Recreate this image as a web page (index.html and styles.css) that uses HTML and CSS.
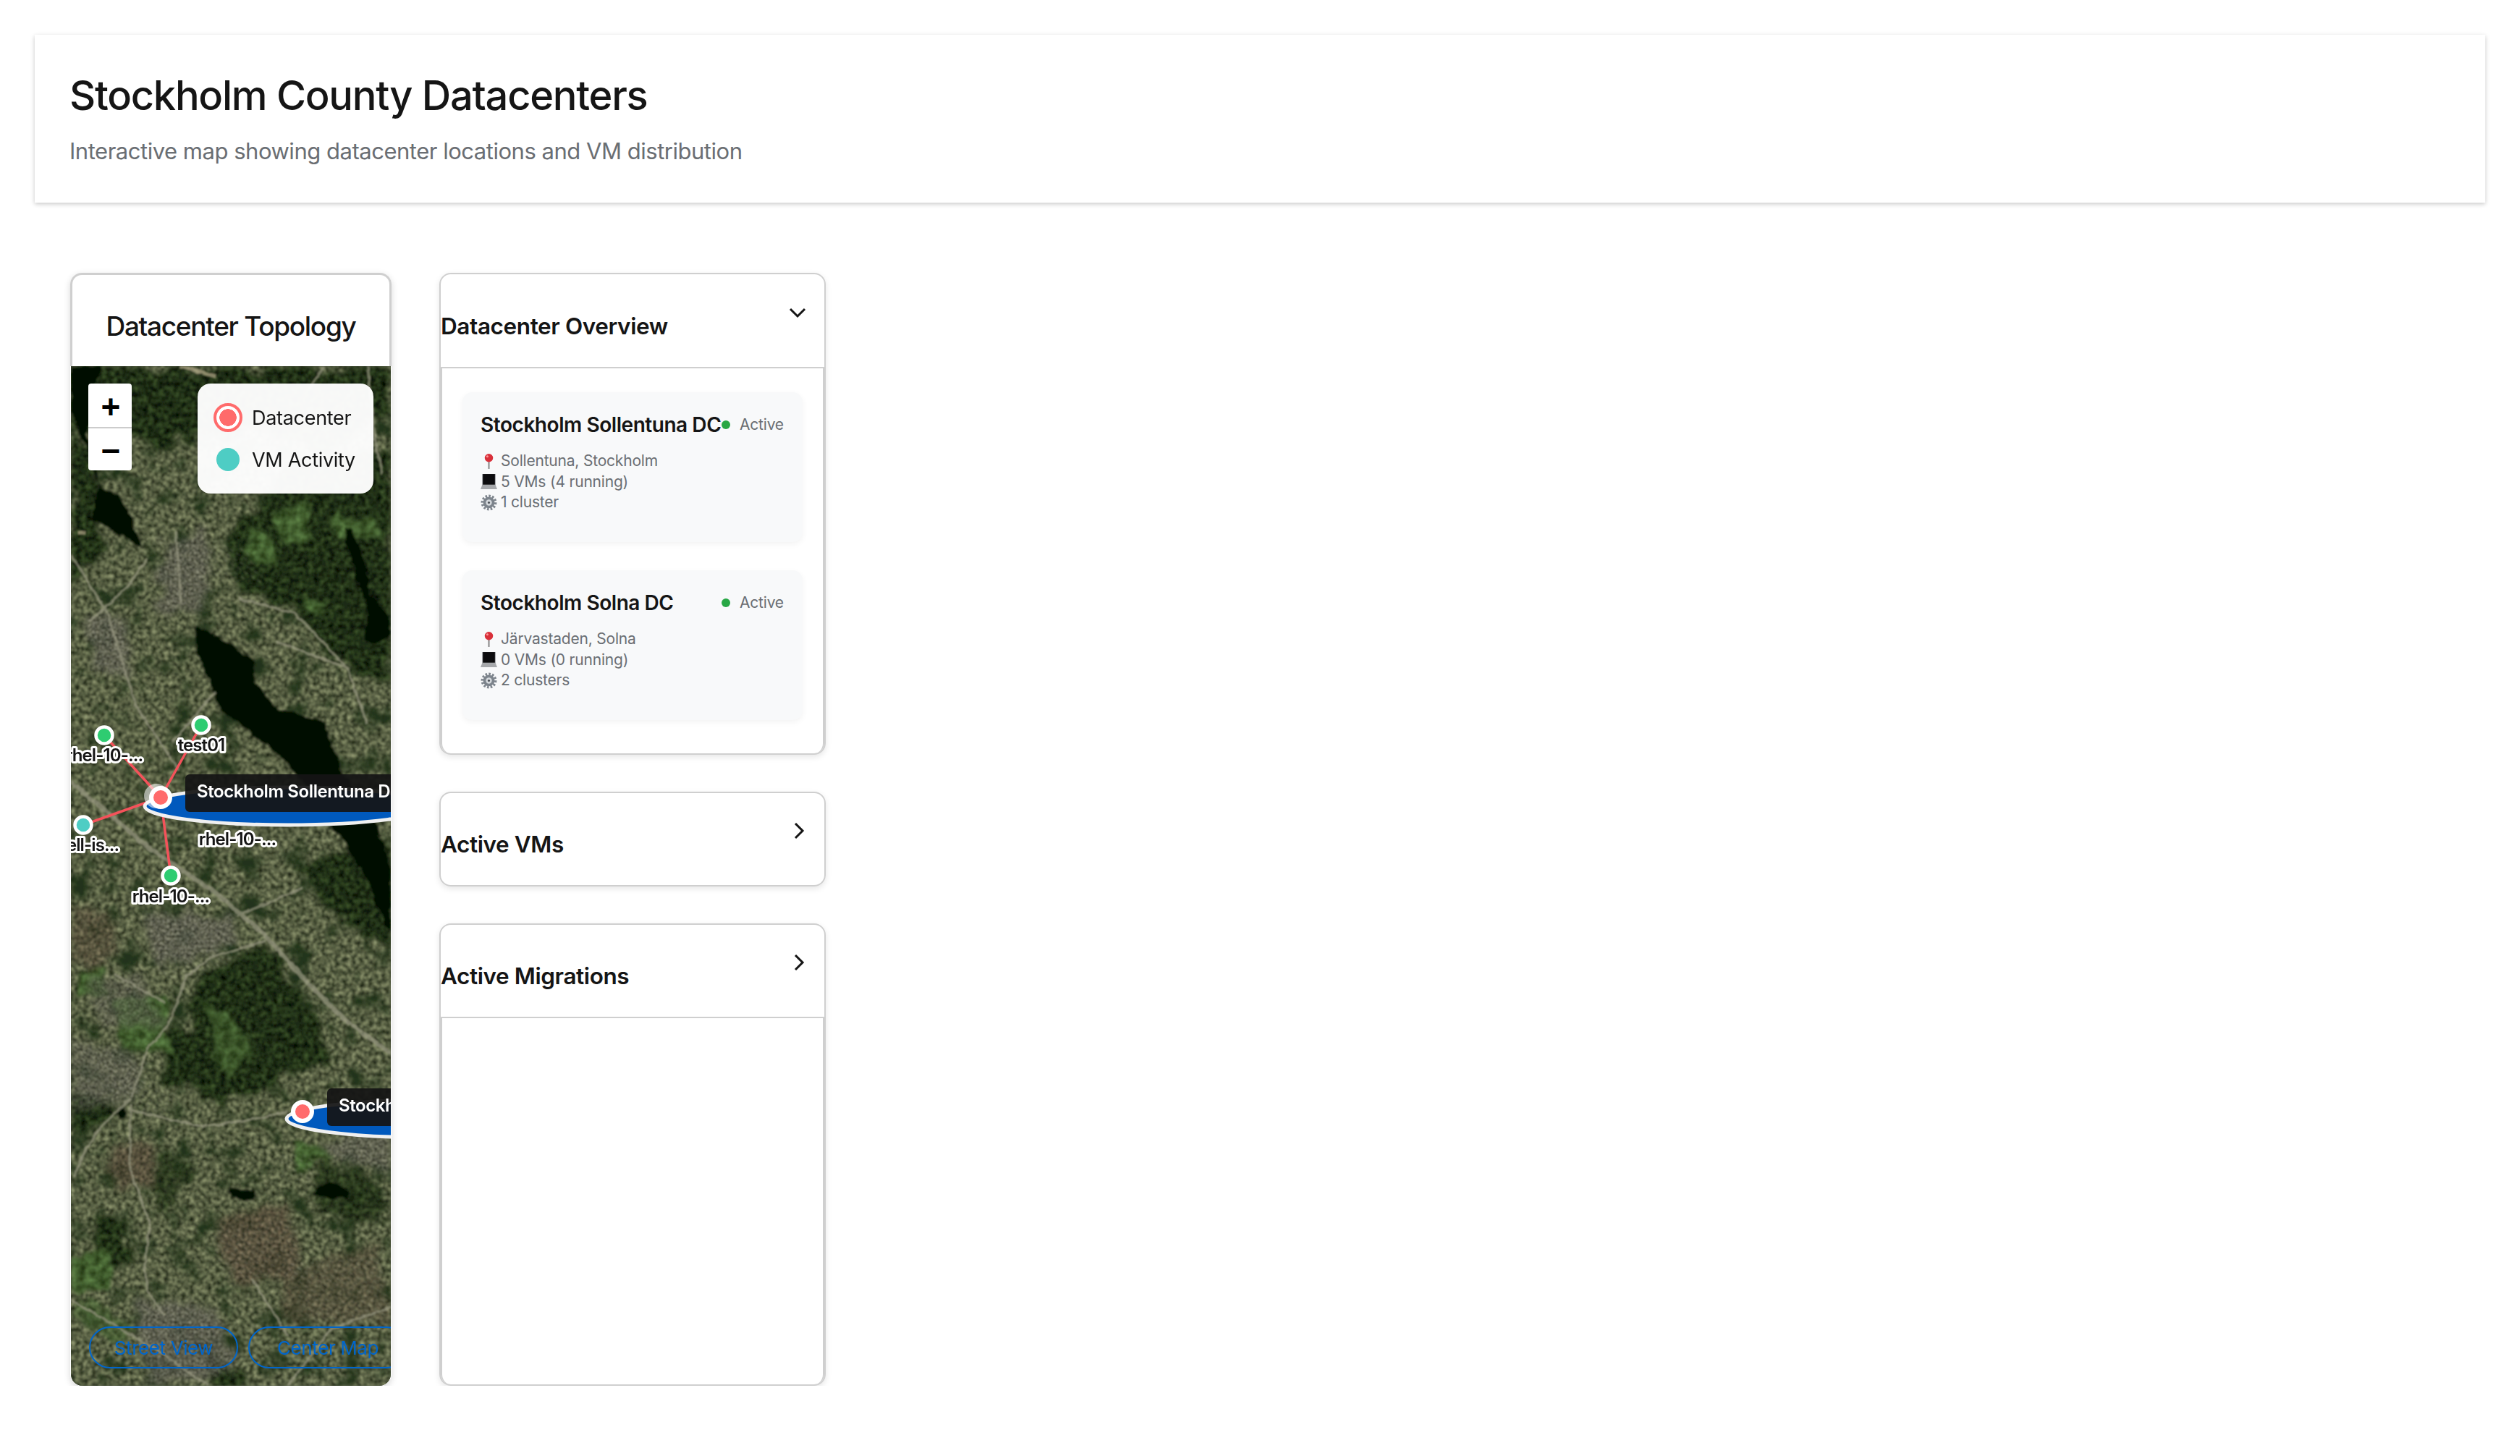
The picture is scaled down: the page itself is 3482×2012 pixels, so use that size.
FILE: index.html
```html
<!DOCTYPE html>
<html>
<head>
  <meta charset="UTF-8">
  <title>Stockholm County Datacenters</title>
  <link rel="stylesheet" href="styles.css">
</head>
<body>

  <header class="page-header">
    <h1>Stockholm County Datacenters</h1>
    <p>Interactive map showing datacenter locations and VM distribution</p>
  </header>

  <main class="layout">

    <!-- Map card -->
    <section class="topology">
      <h2 class="topology-title">Datacenter Topology</h2>
      <div class="map">
        <svg class="map-art" viewBox="0 0 442 1409" width="442" height="1409">
          <defs>
            <filter id="suburb" filterUnits="userSpaceOnUse" x="0" y="0" width="442" height="1409" color-interpolation-filters="sRGB">
              <feTurbulence type="fractalNoise" baseFrequency="0.17" numOctaves="4" seed="3"/>
              <feColorMatrix values="0 0 0 .72 -.02  0 0 0 .72 .01  0 0 0 .58 -.03  0 0 0 0 1"/>
              <feComposite in2="SourceAlpha" operator="in"/>
            </filter>
            <filter id="mottle" filterUnits="userSpaceOnUse" x="0" y="0" width="442" height="1409" color-interpolation-filters="sRGB">
              <feTurbulence type="fractalNoise" baseFrequency="0.03" numOctaves="4" seed="23"/>
              <feColorMatrix values="0 0 0 0 .13  0 0 0 0 .2  0 0 0 0 .1  0 0 0 3.5 -1.85"/>
              <feGaussianBlur stdDeviation="1"/>
            </filter>
            <filter id="forest" filterUnits="userSpaceOnUse" x="0" y="0" width="442" height="1409" color-interpolation-filters="sRGB">
              <feTurbulence type="fractalNoise" baseFrequency="0.03" numOctaves="3" seed="8" result="warp"/>
              <feDisplacementMap in="SourceAlpha" in2="warp" scale="44" xChannelSelector="R" yChannelSelector="G" result="shape"/>
              <feGaussianBlur in="shape" stdDeviation="3" result="soft"/>
              <feTurbulence type="fractalNoise" baseFrequency="0.14" numOctaves="4" seed="11"/>
              <feColorMatrix values="0 0 0 .35 -.05  0 0 0 .45 -.04  0 0 0 .25 -.04  0 0 0 0 1"/>
              <feComposite in2="soft" operator="in"/>
            </filter>
            <filter id="field" filterUnits="userSpaceOnUse" x="0" y="0" width="442" height="1409" color-interpolation-filters="sRGB">
              <feTurbulence type="fractalNoise" baseFrequency="0.03" numOctaves="3" seed="5" result="warp"/>
              <feDisplacementMap in="SourceAlpha" in2="warp" scale="30" xChannelSelector="R" yChannelSelector="G" result="shape"/>
              <feGaussianBlur in="shape" stdDeviation="2" result="soft"/>
              <feTurbulence type="fractalNoise" baseFrequency="0.1" numOctaves="3" seed="21"/>
              <feColorMatrix values="0 0 0 .35 .08  0 0 0 .45 .14  0 0 0 .3 .03  0 0 0 0 1"/>
              <feComposite in2="soft" operator="in"/>
            </filter>
            <filter id="urban" filterUnits="userSpaceOnUse" x="0" y="0" width="442" height="1409" color-interpolation-filters="sRGB">
              <feTurbulence type="fractalNoise" baseFrequency="0.04" numOctaves="3" seed="14" result="warp"/>
              <feDisplacementMap in="SourceAlpha" in2="warp" scale="36" xChannelSelector="R" yChannelSelector="G" result="shape"/>
              <feGaussianBlur in="shape" stdDeviation="5" result="soft"/>
              <feTurbulence type="fractalNoise" baseFrequency="0.3" numOctaves="3" seed="31"/>
              <feColorMatrix values="0 0 0 .9 -.06  0 0 0 .88 -.06  0 0 0 .85 -.08  0 0 0 0 1"/>
              <feComposite in2="soft" operator="in"/>
            </filter>
            <filter id="homes" filterUnits="userSpaceOnUse" x="0" y="0" width="442" height="1409" color-interpolation-filters="sRGB">
              <feTurbulence type="fractalNoise" baseFrequency="0.04" numOctaves="3" seed="17" result="warp"/>
              <feDisplacementMap in="SourceAlpha" in2="warp" scale="30" xChannelSelector="R" yChannelSelector="G" result="shape"/>
              <feGaussianBlur in="shape" stdDeviation="5" result="soft"/>
              <feTurbulence type="fractalNoise" baseFrequency="0.22" numOctaves="3" seed="41"/>
              <feColorMatrix values="0 0 0 .8 -.06  0 0 0 .65 -.04  0 0 0 .55 -.05  0 0 0 0 1"/>
              <feComposite in2="soft" operator="in"/>
            </filter>
            <filter id="shore" filterUnits="userSpaceOnUse" x="0" y="0" width="442" height="1409">
              <feTurbulence type="fractalNoise" baseFrequency="0.06" numOctaves="2" seed="2" result="warp"/>
              <feDisplacementMap in="SourceGraphic" in2="warp" scale="10" xChannelSelector="R" yChannelSelector="G"/>
              <feGaussianBlur stdDeviation=".8"/>
            </filter>
            <filter id="track" filterUnits="userSpaceOnUse" x="0" y="0" width="442" height="1409">
              <feTurbulence type="fractalNoise" baseFrequency="0.09" numOctaves="2" seed="9" result="warp"/>
              <feDisplacementMap in="SourceGraphic" in2="warp" scale="5" xChannelSelector="R" yChannelSelector="G"/>
              <feGaussianBlur stdDeviation=".6"/>
            </filter>
            <filter id="soft" filterUnits="userSpaceOnUse" x="0" y="0" width="442" height="1409">
              <feGaussianBlur stdDeviation=".8"/>
            </filter>
            <pattern id="blocks" width="11" height="8" patternUnits="userSpaceOnUse" patternTransform="rotate(32)">
              <rect x="1" y="1" width="6" height="2" fill="#c9c6b8"/>
              <rect x="1" y="4" width="7" height="2" fill="#23261f"/>
            </pattern>
          </defs>

          <g filter="url(#soft)">
            <!-- ground -->
            <rect class="ground" width="442" height="1409" filter="url(#suburb)"/>
            <rect class="ground" width="442" height="1409" filter="url(#mottle)"/>

            <!-- forest -->
            <g filter="url(#forest)">
              <path d="M0 0H442V64L360 120 250 90 120 110 60 84 0 90Z"/>
              <path d="M0 90L36 120 44 260 0 300Z"/>
              <path d="M300 140L442 110V440L360 400 300 330 226 300 210 240Z"/>
              <path d="M310 690L442 660V800L390 790Z"/>
              <path d="M170 840L270 800 340 900 350 960 260 1000 170 980Z"/>
              <path d="M130 920L230 930 240 990 130 990Z"/>
              <path d="M170 970L250 960 260 1010 180 1014Z"/>
              <path d="M26 1184L70 1180 92 1250 60 1254Z"/>
              <path d="M0 1010L50 1010 60 1040 0 1050Z"/>
              <path d="M110 1090L170 1100 150 1170 110 1160Z" opacity=".7"/>
              <path d="M340 1108L400 1100 440 1180 340 1170Z" opacity=".8"/>
              <path d="M170 1330L250 1409H190Z"/>
            </g>

            <!-- fields and lawns -->
            <g filter="url(#field)">
              <path d="M240 230L270 230 290 280 250 270Z"/>
              <path d="M280 200L330 190 330 240 290 240Z"/>
              <path d="M360 200L420 210 430 240 370 240Z"/>
              <path d="M320 320L350 320 350 340 325 340Z"/>
              <path d="M10 830L50 830 50 870 10 870Z"/>
              <path d="M60 880L130 870 140 950 70 940Z"/>
              <path d="M180 870L220 900 260 950 210 980Z" opacity=".8"/>
              <path d="M0 1230L60 1220 50 1276 0 1276Z"/>
              <path d="M20 1280L90 1330 60 1350 0 1310Z" opacity=".6"/>
              <path d="M310 1070L360 1090 320 1110Z"/>
            </g>

            <!-- built up areas -->
            <g class="built" filter="url(#urban)">
              <path d="M130 240L190 220 190 340 120 340Z"/>
              <path d="M10 350L70 340 90 430 40 420Z"/>
              <path d="M100 750L220 760 230 800 120 830Z"/>
              <path d="M20 850L100 840 130 910 40 920Z" opacity=".7"/>
              <path d="M0 930L90 950 100 1000 0 1010Z" opacity=".8"/>
              <path d="M80 1290L200 1300 230 1390 110 1409Z"/>
              <path d="M340 1080L442 1040V1120L400 1110Z" opacity=".9"/>
              <path d="M0 1000L90 980 90 1020 0 1030Z" opacity=".7"/>
            </g>
            <g class="built" filter="url(#homes)">
              <path d="M200 1180L300 1160 320 1260 220 1270Z"/>
              <path d="M50 1080L110 1070 120 1130 60 1140Z"/>
              <path d="M290 1260L420 1210 442 1320 300 1320Z" opacity=".7"/>
              <path d="M0 740L60 760 60 820 0 830Z" opacity=".8"/>
            </g>
            <path class="blocks" d="M110 750L230 770 220 830 130 850Z"/>
            <path class="blocks" d="M20 930L110 960 100 1010 10 1000Z"/>
            <path class="blocks" d="M100 980L150 1010 130 1040 90 1030Z"/>
            <path class="blocks" d="M190 1190L310 1180 320 1260 210 1260Z"/>
            <path class="blocks" d="M290 1090L340 1090 330 1130 290 1120Z"/>
            <path class="blocks" d="M300 1240L430 1230 442 1320 320 1320Z"/>
            <path class="blocks" d="M180 240L240 250 270 300 190 290Z"/>
            <path class="blocks" d="M130 1290L210 1320 190 1380 110 1370Z"/>

            <!-- water -->
            <g class="water" filter="url(#shore)">
              <path d="M0 0H44L30 40 22 90 30 144 42 170 72 184 98 252 72 236 30 212 38 150 14 100 0 60Z"/>
              <path d="M169 357L199 371 249 404 255 437 282 471 349 491 372 554 422 634 442 694V787L422 741 402 694 362 637 302 551 259 514 232 494 209 477 189 431 175 394Z"/>
              <path d="M379 227L389 227 409 277 412 314 439 347 439 371 422 384 405 381 412 344 399 301 382 251Z"/>
              <path d="M335 1144L359 1124 385 1141 382 1152 349 1147Z"/>
              <path d="M218 1140L254 1138 250 1152 222 1150Z"/>
              <path d="M64 1030L74 1024 78 1034 66 1042Z"/>
            </g>

            <!-- roads -->
            <g class="roads" filter="url(#track)">
              <path class="road-wide" d="M0 574L109 667 199 727 269 787 325 850 375 900 442 950"/>
              <path d="M269 794L192 817 159 844 135 910 105 944 84 1010"/>
              <path d="M79 1027L182 1051 249 1041 299 1031"/>
              <path d="M82 1020L82 1111 109 1184 102 1244 105 1277 129 1311"/>
              <path d="M84 1012C50 1040 20 1070 5 1120"/>
              <path d="M105 267L79 304 25 354"/>
              <path d="M145 227L152 327"/>
              <path d="M232 321L309 341 382 417 409 494"/>
              <path d="M285 381L382 417"/>
              <path d="M0 260L50 340 90 470 150 560"/>
              <path d="M140 520L200 450"/>
              <path d="M350 0L330 30"/>
              <path d="M410 0L420 100 430 150"/>
              <path d="M0 1290L120 1360 190 1409"/>
              <path d="M442 1300L360 1330 300 1409"/>
              <path d="M250 1260L300 1340"/>
              <path d="M230 760L320 720"/>
              <path d="M60 840L130 880"/>
              <path class="road-sand" d="M150 0L200 14"/>
              <path class="road-sand" d="M20 230H10"/>
            </g>
          </g>

          <!-- links -->
          <g class="links">
            <line x1="124" y1="596" x2="46" y2="510"/>
            <line x1="124" y1="596" x2="180" y2="496"/>
            <line x1="124" y1="596" x2="17" y2="634"/>
            <line x1="124" y1="596" x2="138" y2="704"/>
          </g>

          <!-- vm nodes -->
          <circle class="vm-node" cx="230" cy="621" r="11.5"/>
          <circle class="vm-node" cx="46" cy="510" r="11.5"/>
          <circle class="vm-node" cx="180" cy="496" r="11.5"/>
          <circle class="vm-node vm-teal" cx="17" cy="634" r="11.5"/>
          <circle class="vm-node" cx="138" cy="704" r="11.5"/>

          <text class="vm-label" x="46" y="546">rhel-10-...</text>
          <text class="vm-label" x="180" y="532">test01</text>
          <text class="vm-label" x="17" y="670">shell-is...</text>
          <text class="vm-label" x="138" y="741">rhel-10-...</text>
          <text class="vm-label" x="230" y="662">rhel-10-...</text>

          <!-- coverage ellipses and datacenters -->
          <ellipse class="coverage" cx="299" cy="608" rx="197" ry="26"/>
          <ellipse class="coverage" cx="495" cy="1040" rx="197" ry="26"/>
          <circle class="dc-halo" cx="118" cy="594" r="17"/>
          <circle class="dc-node" cx="124" cy="596" r="13"/>
          <circle class="dc-node" cx="320" cy="1030" r="13"/>
        </svg>

        <div class="zoom-control">
          <button>+</button>
          <button>&minus;</button>
        </div>

        <div class="legend">
          <div class="legend-item"><span class="swatch-dc"></span>Datacenter</div>
          <div class="legend-item"><span class="swatch-vm"></span>VM Activity</div>
        </div>

        <div class="dc-tip tip-sollentuna">Stockholm Sollentuna DC</div>
        <div class="dc-tip tip-solna">Stockholm Solna DC</div>

        <div class="map-actions">
          <button>Street View</button>
          <button>Center Map</button>
        </div>
      </div>
    </section>

    <!-- Side panels -->
    <div class="side">

      <section class="panel">
        <div class="panel-head">
          <h3>Datacenter Overview</h3>
          <svg class="chevron chevron-down" width="24" height="16" viewBox="0 0 24 16"><path d="M2 3l10 10L22 3"/></svg>
        </div>
        <div class="panel-body">

          <article class="dc-card">
            <div class="dc-card-top">
              <span class="dc-name">Stockholm Sollentuna DC</span>
              <span class="dc-status"><i></i>Active</span>
            </div>
            <ul class="dc-facts">
              <li>
                <svg class="fact-icon" viewBox="0 0 22 22"><path class="pin-needle" d="M11 10v11"/><circle class="pin-ball" cx="11" cy="6.500" r="5.500"/><circle class="pin-shine" cx="9" cy="4.500" r="1.500"/></svg>
                Sollentuna, Stockholm
              </li>
              <li>
                <svg class="fact-icon" viewBox="0 0 22 22"><path class="lap-base" d="M2 1h18v15l2 5H0l2-5z"/><path class="lap-screen" d="M3 1h16v14H3z"/></svg>
                5 VMs (4 running)
              </li>
              <li>
                <svg class="fact-icon" viewBox="0 0 22 22"><circle class="gear-teeth" cx="11" cy="11" r="8.500"/><circle class="gear-body" cx="11" cy="11" r="7.500"/><circle class="gear-eye" cx="11" cy="11" r="4"/><circle class="gear-hole" cx="11" cy="11" r="1.500"/></svg>
                1 cluster
              </li>
            </ul>
          </article>

          <article class="dc-card">
            <div class="dc-card-top">
              <span class="dc-name">Stockholm Solna DC</span>
              <span class="dc-status"><i></i>Active</span>
            </div>
            <ul class="dc-facts">
              <li>
                <svg class="fact-icon" viewBox="0 0 22 22"><path class="pin-needle" d="M11 10v11"/><circle class="pin-ball" cx="11" cy="6.500" r="5.500"/><circle class="pin-shine" cx="9" cy="4.500" r="1.500"/></svg>
                Järvastaden, Solna
              </li>
              <li>
                <svg class="fact-icon" viewBox="0 0 22 22"><path class="lap-base" d="M2 1h18v15l2 5H0l2-5z"/><path class="lap-screen" d="M3 1h16v14H3z"/></svg>
                0 VMs (0 running)
              </li>
              <li>
                <svg class="fact-icon" viewBox="0 0 22 22"><circle class="gear-teeth" cx="11" cy="11" r="8.500"/><circle class="gear-body" cx="11" cy="11" r="7.500"/><circle class="gear-eye" cx="11" cy="11" r="4"/><circle class="gear-hole" cx="11" cy="11" r="1.500"/></svg>
                2 clusters
              </li>
            </ul>
          </article>

        </div>
      </section>

      <section class="panel panel-closed">
        <div class="panel-head">
          <h3>Active VMs</h3>
          <svg class="chevron" width="16" height="24" viewBox="0 0 16 24"><path d="M3 2l10 10L3 22"/></svg>
        </div>
      </section>

      <section class="panel panel-fill">
        <div class="panel-head">
          <h3>Active Migrations</h3>
          <svg class="chevron" width="16" height="24" viewBox="0 0 16 24"><path d="M3 2l10 10L3 22"/></svg>
        </div>
        <div class="panel-body"></div>
      </section>

    </div>
  </main>

</body>
</html>
```

FILE: styles.css
```css
body {
  margin: 0;
  background-color: #fff;
  font-family: Inter, "Noto Sans", sans-serif;
  color: #151515;
}

.page-header {
  margin: 48px 48px 0;
  padding: 48px 48px 47px;
  background-color: #fff;
  box-shadow: 0 2px 6px rgba(0, 0, 0, 0.22);
}

.page-header h1 {
  margin: 0;
  font-size: 56px;
  font-weight: 500;
  line-height: 72px;
  letter-spacing: -1.25px;
}

.page-header p {
  margin: 17px 0 0;
  font-size: 31px;
  line-height: 48px;
  letter-spacing: -0.48px;
  color: #6a6e73;
}

.layout {
  display: flex;
  gap: 66px;
  padding: 97px 48px 0 97px;
}

/* map card */
.topology {
  width: 444px;
  border-radius: 16px;
  box-shadow: 0 3px 10px rgba(0, 0, 0, 0.16);
}

.topology-title {
  margin: 0;
  height: 126px;
  border: 3px solid #cfcfcf;
  border-bottom: none;
  border-radius: 16px 16px 0 0;
  font-size: 37px;
  font-weight: 500;
  line-height: 142px;
  letter-spacing: -1.3px;
  text-align: center;
}

.map {
  position: relative;
  width: 442px;
  height: 1409px;
  margin: 0 1px;
  overflow: hidden;
  border-radius: 0 0 16px 16px;
  background-color: #3c4732;
}

.map-art {
  position: absolute;
  top: 0;
  left: 0;
}

.ground { fill: #000; }
.built { opacity: 0.62; }
.blocks { fill: url(#blocks); opacity: 0.16; }
.water path { fill: #040805; }

.roads {
  fill: none;
  stroke: #9b9a83;
  stroke-width: 3;
  opacity: 0.7;
}

.road-wide { stroke-width: 6; }
.road-sand { stroke: #b9ae8e; stroke-width: 5; }

.links line {
  stroke: #f4525a;
  stroke-width: 3.500;
}

.vm-node {
  fill: #2ecc71;
  stroke: #fff;
  stroke-width: 4.500;
}

.vm-teal { fill: #4ecdc4; }

.vm-label {
  fill: #151515;
  stroke: #fff;
  stroke-width: 6px;
  stroke-linejoin: round;
  paint-order: stroke;
  font-size: 24px;
  font-weight: 600;
  letter-spacing: -0.9px;
  text-anchor: middle;
}

.coverage {
  fill: #0059bd;
  stroke: #f0f0f0;
  stroke-width: 5;
}

.dc-halo { fill: #fff; opacity: 0.55; }

.dc-node {
  fill: #ff6b6b;
  stroke: #fff;
  stroke-width: 6;
}

.zoom-control {
  position: absolute;
  top: 24px;
  left: 24px;
  width: 60px;
  overflow: hidden;
  border-radius: 4px;
}

.zoom-control button {
  display: block;
  width: 60px;
  height: 60px;
  padding: 3px 0 0 2px;
  border: none;
  background-color: #fff;
  font-family: "Liberation Sans", sans-serif;
  font-size: 46px;
  font-weight: 700;
  line-height: 54px;
  color: #000;
}

.zoom-control button + button {
  border-top: 2px solid #ccc;
}

.legend {
  position: absolute;
  top: 24px;
  left: 175px;
  box-sizing: border-box;
  width: 243px;
  height: 152px;
  padding: 18px 0 0 22px;
  border-radius: 18px;
  background-color: rgba(255, 255, 255, 0.97);
  box-shadow: 0 0 2px 1px rgba(0, 0, 0, 0.18);
}

.legend-item {
  display: flex;
  align-items: center;
  height: 58px;
  font-size: 27px;
  letter-spacing: -0.3px;
}

.swatch-dc,
.swatch-vm {
  box-sizing: border-box;
  flex: none;
  border-radius: 50%;
}

.swatch-dc {
  width: 40px;
  height: 40px;
  margin-right: 13px;
  border: 4px solid #ff6b6b;
  background: radial-gradient(circle, #ff6b6b 0, #ff6b6b 11.500px, #fff 12px);
}

.swatch-vm {
  width: 32px;
  height: 32px;
  margin: 0 17px 0 4px;
  background-color: #4ecdc4;
}

.dc-tip {
  position: absolute;
  box-sizing: border-box;
  height: 52px;
  padding: 0 16px;
  border-radius: 6px;
  background-color: rgba(20, 20, 20, 0.93);
  font-size: 24px;
  font-weight: 600;
  line-height: 48px;
  letter-spacing: -0.4px;
  white-space: nowrap;
  color: #fff;
}

.tip-sollentuna { top: 564px; left: 158px; }
.tip-solna { top: 998px; left: 354px; }

.map-actions {
  position: absolute;
  top: 1327px;
  left: 25px;
  display: flex;
  gap: 14px;
}

.map-actions button {
  flex: none;
  width: 206px;
  height: 58px;
  padding: 0;
  border: 2px solid #06c;
  border-radius: 29px;
  background: none;
  font-family: inherit;
  font-size: 26px;
  letter-spacing: -0.4px;
  color: #06c;
}

.map-actions button + button { width: 220px; }

/* side panels */
.side {
  display: flex;
  flex-direction: column;
  gap: 51px;
  width: 534px;
}

.panel {
  display: flex;
  flex-direction: column;
  border: 2px solid #cfcfcf;
  border-radius: 16px;
  box-shadow: 0 3px 8px rgba(0, 0, 0, 0.1);
}

.panel-fill { flex: 1; }

.panel-head {
  display: flex;
  justify-content: space-between;
  align-items: flex-start;
  height: 128px;
  padding-right: 27px;
}

.panel-closed .panel-head,
.panel-fill .panel-head { height: 127px; }

.panel-closed h3,
.panel-fill h3 { position: relative; top: -1px; }

.panel-head h3 {
  margin: 0;
  padding-top: 52px;
  font-size: 31.500px;
  font-weight: 600;
  line-height: 40px;
  letter-spacing: -0.4px;
}

.chevron {
  margin-top: 40px;
  fill: none;
  stroke: #151515;
  stroke-width: 3;
}

.chevron-down {
  margin-top: 45px;
  margin-right: -2px;
}

.panel-body {
  flex: 1;
  display: flex;
  flex-direction: column;
  gap: 39px;
  padding: 33px 28px 46px;
  border: solid #cfcfcf;
  border-width: 2px 2px 0;
  border-radius: 0 0 14px 14px;
}

.dc-card {
  box-sizing: border-box;
  height: 207px;
  padding: 26px 25px 0;
  border-radius: 14px;
  background-color: #f8f9fa;
  box-shadow: 0 3px 8px rgba(0, 0, 0, 0.05);
}

.dc-card-top {
  display: flex;
  justify-content: space-between;
  height: 38px;
  line-height: 38px;
}

.dc-name {
  font-size: 28px;
  font-weight: 600;
  letter-spacing: -0.45px;
  white-space: nowrap;
}

.dc-status {
  display: flex;
  align-items: center;
  width: 87px;
  flex: none;
  font-size: 21px;
  letter-spacing: -0.2px;
  color: #6a6e73;
}

.dc-status i {
  flex: none;
  width: 12px;
  height: 12px;
  margin-right: 13px;
  border-radius: 50%;
  background-color: #28a745;
}

.dc-facts {
  margin: 17px 0 0;
  padding: 0;
  list-style: none;
  font-size: 21px;
  line-height: 28.500px;
  letter-spacing: -0.2px;
  color: #6a6e73;
}

.dc-facts li {
  display: flex;
  align-items: center;
  gap: 5px;
}

.fact-icon {
  flex: none;
  width: 23px;
  height: 23px;
}

.pin-needle { stroke: #8a8a8a; stroke-width: 2; }
.pin-ball { fill: #d9303a; }
.pin-shine { fill: #ff9a9a; }
.lap-base { fill: #a6a8ab; }
.lap-screen { fill: #0c0c0e; }
.gear-teeth { fill: none; stroke: #7d848c; stroke-width: 4; stroke-dasharray: 2.400 2; }
.gear-body { fill: #7d848c; }
.gear-eye { fill: #d4d8dc; }
.gear-hole { fill: #4a4f55; }
```
